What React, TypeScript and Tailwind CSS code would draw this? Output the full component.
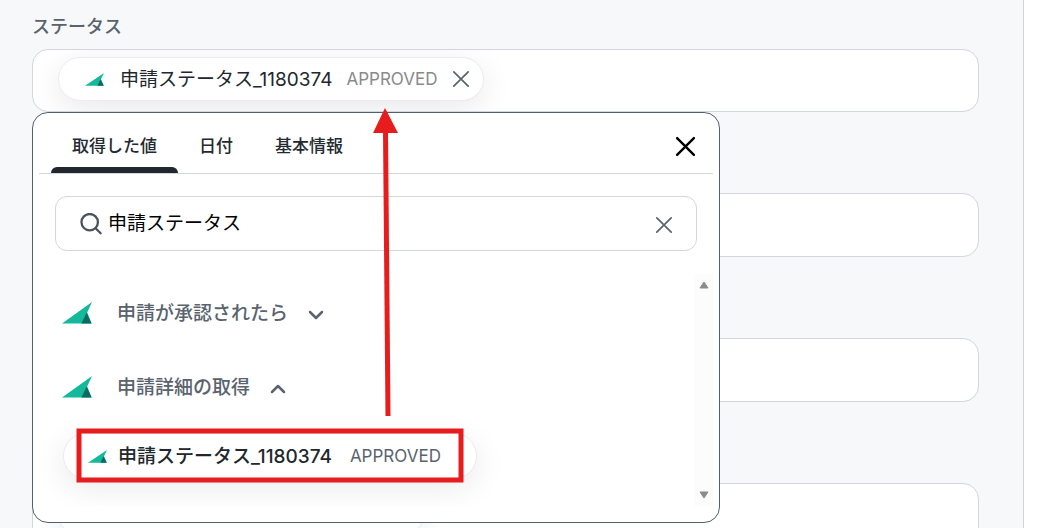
import { useState } from "react";

function BrandMark({ className }: { className: string }) {
  return (
    <svg viewBox="0 0 30 22" preserveAspectRatio="none" className={className} aria-hidden="true">
      <path d="M0 21.6 30 0 25.2 10.5 29.6 21.6Z" fill="#14b89b" />
      <path d="M19.4 21.6 24.6 10.4 29.6 21.6Z" fill="#0b6b60" />
    </svg>
  );
}

function Cross({ className, width = 2 }: { className: string; width?: number }) {
  return (
    <svg viewBox="0 0 20 20" className={className} fill="none" stroke="currentColor" strokeWidth={width} strokeLinecap="round" aria-hidden="true">
      <path d="M2 2 18 18M18 2 2 18" />
    </svg>
  );
}

function Chevron({ up }: { up?: boolean }) {
  return (
    <svg viewBox="0 0 16 10" className="mt-1 h-[10px] w-4" fill="none" stroke="currentColor" strokeWidth="2.5" strokeLinecap="round" strokeLinejoin="round" aria-hidden="true">
      <path d={up ? "M2 8 8 2 14 8" : "M2 2 8 8 14 2"} />
    </svg>
  );
}

function Tab({ children, active, onClick }: { children: string; active: boolean; onClick: () => void }) {
  return (
    <button
      type="button"
      role="tab"
      aria-selected={active}
      onClick={onClick}
      className="flex flex-col justify-between text-[17px] font-medium text-[#242a31]"
    >
      <span className="px-[21px] pt-5 leading-[26px]">{children}</span>
      <span className={active ? "h-[6px] w-full rounded-t-[6px] bg-[#22272e]" : "h-[6px] w-full"} />
    </button>
  );
}

function Group({ title, open }: { title: string; open?: boolean }) {
  return (
    <button type="button" aria-expanded={!!open} className="flex h-[74px] items-center text-[19px] font-medium text-[#59636e]">
      <BrandMark className="mr-[25px] h-[22px] w-[30px]" />
      <span className="mr-[20px] pt-[2px]">{title}</span>
      <Chevron up={open} />
    </button>
  );
}

export default function App() {
  const [tab, setTab] = useState(0);
  const [query, setQuery] = useState("申請ステータス");
  const tabs = ["取得した値", "日付", "基本情報"];

  return (
    <div className="relative flex h-screen overflow-hidden bg-white font-['Inter','Noto_Sans_CJK_JP',sans-serif]">
      <main className="flex-1 border-r border-[#d0d5dd] bg-[#f6f8fa] pr-11 pl-8">
        <h2 className="mt-3 h-[37px] text-[18px] leading-[30px] font-medium text-[#59636e]">ステータス</h2>
        <div className="relative flex flex-col gap-[81px]">
          <div className="flex h-[63px] items-start overflow-hidden rounded-[16px] border border-[#d0d7de] bg-white px-[25px] py-[7px]">
            <div className="flex h-11 items-center rounded-full border border-[#e8ebf0] bg-white pr-[13px] pl-[26px] shadow-[0_8px_32px_rgba(0,0,0,0.09)]">
              <BrandMark className="mr-4 h-[13px] w-[19px]" />
              <span className="mr-[14px] pt-[2px] text-[19px] text-[#22272e]">申請ステータス_1180374</span>
              <span className="mr-[14px] pt-[2px] text-[17px] text-[#8a8a8a]">APPROVED</span>
              <button type="button" aria-label="削除" className="text-[#59636e]">
                <Cross className="size-[18px]" width={1.9} />
              </button>
            </div>
          </div>
          <div className="h-16 rounded-[16px] border border-[#d0d7de] bg-white" />
          <div className="h-16 rounded-[16px] border border-[#d0d7de] bg-white" />
          <div className="h-16 overflow-hidden rounded-[16px] border border-[#d0d7de] bg-white px-[25px] py-2">
            <div className="h-11 w-[366px] rounded-full border border-[#e8ebf0] bg-white shadow-[0_8px_32px_rgba(0,0,0,0.09)]" />
          </div>

          <section className="absolute top-[63px] left-0 flex h-[411px] w-[688px] flex-col overflow-hidden rounded-[16px] border border-[#545f6c] bg-white">
            <header className="mx-[6px] flex h-[61px] items-stretch justify-between border-b border-[#d0d7de] pr-[17px] pl-3">
              <div role="tablist" className="flex">
                {tabs.map((name, i) => (
                  <Tab key={name} active={tab === i} onClick={() => setTab(i)}>
                    {name}
                  </Tab>
                ))}
              </div>
              <button type="button" aria-label="閉じる" className="pt-[6px] text-black">
                <Cross className="size-[21px]" width={2.3} />
              </button>
            </header>

            <label className="mx-[22px] mt-[22px] flex h-[55px] shrink-0 items-center rounded-[12px] border border-[#d0d7de] pr-[23px] pl-6">
              <svg viewBox="0 0 22 22" className="mr-[6px] size-[22px]" fill="none" stroke="#4a5460" strokeWidth="2.3" strokeLinecap="round" aria-hidden="true">
                <circle cx="9.7" cy="9.2" r="8.2" />
                <path d="m15.8 15.5 4.8 4.8" />
              </svg>
              <input
                aria-label="検索"
                value={query}
                onChange={(e) => setQuery(e.target.value)}
                className="min-w-0 flex-1 pt-[2px] text-[19px] text-black outline-none"
              />
              <button type="button" aria-label="クリア" onClick={() => setQuery("")} className="pt-[2px] text-[#59636e]">
                <Cross className="size-[18px]" width={1.9} />
              </button>
            </label>

            <div className="mt-[23px] mr-[6px] mb-4 flex min-h-0 flex-1">
              <div className="flex flex-1 flex-col items-start overflow-hidden pt-[2px] pl-[29px]">
                <Group title="申請が承認されたら" />
                <Group title="申請詳細の取得" open />
                <button
                  type="button"
                  className="mt-[9px] ml-px flex h-[46px] shrink-0 items-center rounded-full border border-[#e8ebf0] bg-white pr-[35px] pl-6 shadow-[0_8px_32px_rgba(0,0,0,0.09)]"
                >
                  <BrandMark className="mr-[11px] h-[13px] w-[19px]" />
                  <span className="mr-[18px] pt-[2px] text-[19px] font-medium text-[#22272e]">申請ステータス_1180374</span>
                  <span className="pt-[2px] text-[17px] text-[#59636e]">APPROVED</span>
                </button>
              </div>
              <div className="flex w-[19px] flex-col items-center justify-between bg-[#fcfcfc] py-[7px]" aria-hidden="true">
                <svg viewBox="0 0 10 8" className="h-2 w-[10px]" fill="#8b8b8b" stroke="#8b8b8b" strokeLinejoin="round">
                  <path d="M1 7 5 1 9 7Z" />
                </svg>
                <svg viewBox="0 0 10 8" className="h-2 w-[10px]" fill="#8b8b8b" stroke="#8b8b8b" strokeLinejoin="round">
                  <path d="M1 1 5 7 9 1Z" />
                </svg>
              </div>
            </div>
          </section>
        </div>
      </main>
      <div className="w-[14px] bg-white" />

      <svg viewBox="0 0 480 528" className="pointer-events-none absolute top-0 left-0 h-[528px] w-[480px]" aria-hidden="true">
        <path d="M385.5 130 388 416" stroke="#e71d1d" strokeWidth="5" />
        <path d="M385 108 398 133H373Z" fill="#e71d1d" />
        <rect x="79" y="431" width="382" height="49" fill="none" stroke="#e71d1d" strokeWidth="5" />
      </svg>
    </div>
  );
}
